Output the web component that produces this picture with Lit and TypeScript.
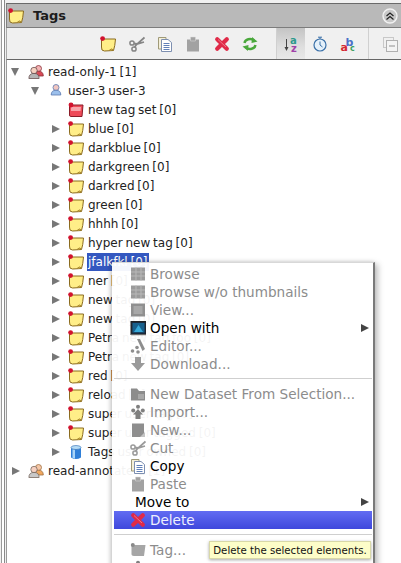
import { LitElement, css, html, svg } from "lit";
import { customElement } from "lit/decorators.js";

const note = (fill = "#ffee88", edge = "#8a6a1e") => svg`
  <path d="M1.5 3 H15.5 Q15 10 13.5 14.5 L4.5 15 Q1 15 1.5 11 Z" fill=${fill} stroke=${edge} stroke-width="1"/>
  <path d="M13.5 14 Q11.5 11.5 9 14.5" fill="#d8b84a" stroke=${edge} stroke-width=".6"/>
  <circle cx="2.6" cy="2.6" r="2.4" fill="#d2122e"/>`;

const person = (x: number, y: number, s: number, head: string, body: string, line: string) => svg`
  <circle cx=${x} cy=${y} r=${s} fill=${head} stroke=${line} stroke-width=".8"/>
  <path d="M${x - s * 1.6} ${y + s * 2.5} Q${x - s * 1.6} ${y + s * .9} ${x} ${y + s * .9} Q${x + s * 1.6} ${y + s * .9} ${x + s * 1.6} ${y + s * 2.5} Z" fill=${body} stroke=${line} stroke-width=".8"/>`;

const scissors = (c: string) => svg`
  <path d="M15.5 1.5 L7 9 L5.5 11.5 M15 6 L8 8 L5 7.5" stroke=${c} stroke-width="1.8" fill="none"/>
  <circle cx="3" cy="7" r="2.1" fill="none" stroke=${c} stroke-width="1.5"/>
  <circle cx="5" cy="13" r="2.1" fill="none" stroke=${c} stroke-width="1.5"/>`;

const pages = svg`
  <path d="M1.5 1.5 H9 V13 H1.5 Z" fill="#f4efd8" stroke="#a09a78"/>
  <path d="M4.5 3.5 H11 L14.5 6.5 V15.5 H4.5 Z" fill="#fff" stroke="#7d8fb0"/>
  <path d="M6.5 7.5 H12.5 M6.5 9.5 H12.5 M6.5 11.5 H12.5 M6.5 13.5 H12.5" stroke="#6080b8"/>`;

const clipboard = (c: string) => svg`
  <path d="M2 3.5 H14 V15.5 H2 Z" fill=${c}/><path d="M5.5 1 H10.5 V5 H5.5 Z" fill=${c} stroke="#ddd" stroke-width=".5"/>`;

const cross = svg`
  <path d="M3.2 3.2 L12.8 12.8 M12.8 3.2 L3.2 12.8" stroke="#e02a48" stroke-width="4.2" stroke-linecap="round"/>
  <path d="M4 3.5 L12 11" stroke="#f48a98" stroke-width=".8"/>`;

const grid = svg`
  <rect x="1" y="1.5" width="14" height="13" fill="#9b9b9b"/>
  <path d="M1 6 H15 M1 10 H15 M6 1.5 V14.5 M11 1.5 V14.5" stroke="#b8b8b8"/>`;

const icons: Record<string, unknown> = {
  note: note(),
  red: svg`
    <path d="M1.5 3 H15 L14 14.5 H3 Q1 14.5 1.5 12 Z" fill="#ee4a58" stroke="#8a1c28"/>
    <path d="M3 5 H13 L12.5 9 H3 Z" fill="#f7a4aa"/>
    <circle cx="3" cy="3" r="2.4" fill="#d2122e"/>`,
  users: svg`
    ${person(10.5, 4.5, 3, "#f4b4b4", "#d84a56", "#8a3038")}
    ${person(6, 6.5, 3.2, "#f6d0c0", "#b4b4b4", "#6a5050")}`,
  usersOrange: svg`
    ${person(10.5, 4.5, 3, "#f6c8a8", "#f0a860", "#a07040")}
    ${person(6, 6.5, 3.2, "#f6d0c0", "#c8c8c8", "#7a6a60")}`,
  user: person(8, 4.5, 3, "#f2c6c0", "#9cc0ec", "#5a78b0"),
  db: svg`
    <path d="M3 3.5 V13.5 Q8 16.5 13 13.5 V3.5 Z" fill="#2f7fd8"/>
    <path d="M4.5 5 V14 L7 14.8 V5.5 Z" fill="#a8d4f8"/>
    <ellipse cx="8" cy="3.5" rx="5" ry="2" fill="#b6dcf6" stroke="#2a68b0" stroke-width=".6"/>`,
  scissors: scissors("#858585"),
  scissorsMuted: scissors("#9a9a9a"),
  pages,
  clipboard: clipboard("#a2a2a2"),
  cross,
  refresh: svg`
    <path d="M2.5 7 A5.5 4.5 0 0 1 12 4.5" fill="none" stroke="#4aa83c" stroke-width="2.4"/>
    <path d="M10 1 L15.5 5.5 L9.5 7 Z" fill="#4aa83c"/>
    <path d="M13.5 9 A5.5 4.5 0 0 1 4 11.5" fill="none" stroke="#4aa83c" stroke-width="2.4"/>
    <path d="M6 15 L.5 10.5 L6.5 9 Z" fill="#4aa83c"/>`,
  az: svg`
    <path d="M3.5 3 V13" stroke="#444" stroke-width="1"/><path d="M1.5 11 L3.5 15 L5.5 11 Z" fill="#444"/>
    <text x="7" y="7.5" font-size="10" font-weight="700" font-family="DejaVu Sans" fill="#2c9a8c">a</text>
    <text x="8" y="15.5" font-size="10" font-weight="700" font-family="DejaVu Sans" fill="#a040a8">z</text>`,
  timer: svg`
    <circle cx="8" cy="9" r="6" fill="#e4f0fa" stroke="#3a70a8" stroke-width="1.2"/>
    <path d="M6 1.2 H10 M8 1.2 V3 M8 5.5 V9 L10.5 11" stroke="#3a70a8" stroke-width="1" fill="none"/>`,
  abc: svg`
    <text x="5.5" y="9.5" font-size="11" font-weight="700" font-family="DejaVu Sans" fill="#4a70c8">b</text>
    <text x="10" y="14.5" font-size="8" font-weight="700" font-family="DejaVu Sans" fill="#3aa060">c</text>
    <text x="0.5" y="15" font-size="11" font-weight="700" font-family="DejaVu Sans" fill="#d42830">a</text>`,
  collapse: svg`
    <rect x="1.5" y="1.5" width="10" height="10" fill="none" stroke="#c8c8c8"/>
    <rect x="4.5" y="4.5" width="11" height="11" fill="#f4f4f4" stroke="#b0b0b0"/>
    <path d="M7 10 H13" stroke="#a0a0a0" stroke-width="1.2"/>`,
  browse: grid,
  view: svg`
    <rect x="1" y="1.5" width="14" height="13" fill="#8f8f8f"/><rect x="3.5" y="4" width="9" height="8" fill="#a8a8a8"/>`,
  open: svg`
    <rect x="1" y="1.5" width="15" height="13" fill="#1c2a3c" stroke="#222"/>
    <rect x="2.5" y="3" width="12" height="9.5" fill="#18608c"/>
    <path d="M4 12 L8.5 5 L13 12 Z" fill="#36a8d8"/><path d="M1 14.8 H16" stroke="#888"/>`,
  editor: svg`
    <path d="M7 1 L10 1 L15 11 L12.5 13 Z" fill="#8e8e8e"/>
    <circle cx="2.5" cy="13" r="1.8" fill="#8e8e8e"/><circle cx="7" cy="9.5" r="1.8" fill="#8e8e8e"/><circle cx="8" cy="14" r="1.8" fill="#8e8e8e"/>`,
  download: svg`<path d="M5 1 H11 V7 H15 L8 15 L1 7 H5 Z" fill="#9a9a9a"/>`,
  dataset: svg`
    <path d="M1 2.5 H7 L9 5 H15 V14.5 H1 Z" fill="#8c8c8c"/><rect x="8" y="8" width="6" height="5" fill="#a8a8a8"/>`,
  import: svg`
    <circle cx="8" cy="2.8" r="2" fill="#7f7f7f"/><circle cx="3.2" cy="6.5" r="2" fill="#7f7f7f"/><circle cx="12.8" cy="6.5" r="2" fill="#7f7f7f"/>
    <path d="M8 5 L13 10.5 H10.5 V15 H5.5 V10.5 H3 Z" fill="#7f7f7f"/>`,
  newSet: svg`<path d="M2 1.5 H14 V13 L12 15 H2 Z" fill="#8e8e8e"/><path d="M10 15 L15 10 V15 Z" fill="#c4c4c4"/>`,
  tagOff: svg`<path d="M1.5 3 H15.5 L14 14 H4 Q1 14 1.5 11 Z" fill="#a6a6a6"/><circle cx="2.8" cy="3" r="2" fill="#8a8a8a"/>`,
};

const icon = (name: string) => html`<svg class="ico" viewBox="0 0 16 16" width="16" height="16">${icons[name]}</svg>`;

const tree: [number, string, string, string][] = [
  [0, "open", "users", "read-only-1 [1]"],
  [1, "open", "user", "user-3 user-3"],
  [2, "", "red", "new tag set [0]"],
  [2, "closed", "note", "blue [0]"],
  [2, "closed", "note", "darkblue [0]"],
  [2, "closed", "note", "darkgreen [0]"],
  [2, "closed", "note", "darkred [0]"],
  [2, "closed", "note", "green [0]"],
  [2, "closed", "note", "hhhh [0]"],
  [2, "closed", "note", "hyper new tag [0]"],
  [2, "closed", "note", "jfalkfkl [0]"],
  [2, "closed", "note", "ner [0]"],
  [2, "closed", "note", "new tag [0]"],
  [2, "closed", "note", "new tag [0]"],
  [2, "closed", "note", "Petra new tag foo [0]"],
  [2, "closed", "note", "Petra new tag [0]"],
  [2, "closed", "note", "red [0]"],
  [2, "closed", "note", "reload [0]"],
  [2, "closed", "note", "super user tag [0]"],
  [2, "closed", "note", "super user tagged [0]"],
  [2, "closed", "db", "Tags user owned [0]"],
  [0, "closed", "usersOrange", "read-annotate-1 [1]"],
];

type Item = { label?: string; ic?: string; on?: boolean; sub?: boolean; hot?: boolean; sep?: boolean; bare?: boolean };

const menu: Item[] = [
  { label: "Browse", ic: "browse" },
  { label: "Browse w/o thumbnails", ic: "browse" },
  { label: "View...", ic: "view" },
  { label: "Open with", ic: "open", on: true, sub: true },
  { label: "Editor...", ic: "editor" },
  { label: "Download...", ic: "download" },
  { sep: true },
  { label: "New Dataset From Selection...", ic: "dataset" },
  { label: "Import...", ic: "import" },
  { label: "New...", ic: "newSet" },
  { label: "Cut", ic: "scissorsMuted" },
  { label: "Copy", ic: "pages", on: true },
  { label: "Paste", ic: "clipboard" },
  { label: "Move to", on: true, sub: true, bare: true },
  { label: "Delete", ic: "cross", hot: true },
  { sep: true },
  { label: "Tag...", ic: "tagOff" },
  { label: "", ic: "import" },
];

@customElement("app-root")
export class AppRoot extends LitElement {
  static styles = css`
    :host {
      display: flex;
      position: relative;
      width: 401px;
      height: 563px;
      overflow: hidden;
      background: #f1f1f1;
      font-family: "DejaVu Sans", sans-serif;
      font-size: 12px;
      color: #222;
    }
    .rail {
      flex: none;
      width: 4px;
      margin-left: 1px;
      border-left: 1px solid #9a9a9a;
      border-right: 1px solid #8a8a8a;
      box-sizing: border-box;
      background: #fff;
    }
    .panel {
      flex: 1;
      display: flex;
      flex-direction: column;
      min-width: 0;
      padding-top: 3px;
      margin-left: 1px;
    }
    .head {
      flex: none;
      display: flex;
      align-items: center;
      height: 25px;
      box-sizing: border-box;
      border-top: 1px solid #6a6a6a;
      border-bottom: 1px solid #7c7c7c;
      border-left: 1px solid #808080;
      background: #b9b9b9;
      padding: 0 3px 0 1px;
    }
    .head .ico {
      margin-top: 1px;
    }
    .head b {
      margin-left: 9px;
      font-size: 13px;
      color: #1c1c1c;
    }
    .fold {
      margin-left: auto;
      display: flex;
    }
    .tools {
      flex: none;
      display: flex;
      align-items: center;
      height: 32px;
      box-sizing: border-box;
      padding-left: 87px;
      border-left: 1px solid #a8a8a8;
      border-bottom: 1px solid #666;
      background: #f0f0f0;
    }
    .tool {
      width: 28.4px;
      align-self: stretch;
      display: flex;
      align-items: center;
      justify-content: center;
      flex: none;
    }
    .tool.pressed {
      width: 29px;
      background: linear-gradient(#c4c4c4, #dedede 60%, #e8e8e8);
    }
    .tool.div {
      border-left: 1px solid #d0d0d0;
      box-sizing: border-box;
    }
    .gap {
      width: 12px;
      flex: none;
    }
    .gap.wide {
      width: 7px;
      margin-right: 7px;
      align-self: stretch;
      border-right: 1px solid #d0d0d0;
      box-sizing: border-box;
    }
    .tree {
      flex: 1;
      background: #fff;
      border-left: 1px solid #9a9a9a;
      padding-top: 2px;
      word-spacing: -1px;
    }
    .row {
      display: flex;
      align-items: center;
      height: 19px;
    }
    .l0 {
      padding-left: 4px;
    }
    .l1 {
      padding-left: 24px;
    }
    .l2 {
      padding-left: 44px;
    }
    .arrow {
      flex: none;
      width: 17px;
      display: flex;
    }
    .open i {
      width: 0;
      height: 0;
      border-left: 4.5px solid transparent;
      border-right: 4.5px solid transparent;
      border-top: 8px solid #777;
    }
    .closed i {
      width: 0;
      height: 0;
      margin-left: 1px;
      border-top: 4.5px solid transparent;
      border-bottom: 4.5px solid transparent;
      border-left: 8px solid #777;
    }
    .pic {
      flex: none;
      width: 20px;
      display: flex;
    }
    .name {
      white-space: nowrap;
      padding: 0 1px;
      margin-left: -1px;
    }
    .name.sel {
      background: #3458c0;
      color: #fff;
      line-height: 18px;
    }
    .menu {
      position: absolute;
      left: 112px;
      top: 262px;
      width: 263px;
      height: 310px;
      box-sizing: border-box;
      padding: 2px 1px 0 2px;
      background: rgba(255, 255, 255, 0.95);
      border-top: 1px solid #d8d8d8;
      border-right: 2px solid #7a7a7a;
      box-shadow: -2px 0 4px rgba(0, 0, 0, 0.18), 3px 2px 6px rgba(0, 0, 0, 0.25);
      color: #8c8c8c;
    }
    .item {
      display: flex;
      align-items: center;
      height: 18px;
      padding-left: 16px;
      white-space: nowrap;
      font-size: 13.6px;
    }
    .item .ico {
      flex: none;
      margin-right: 4px;
    }
    .item.on {
      color: #000;
    }
    .item.bare {
      padding-left: 21px;
    }
    .item.hot {
      background: linear-gradient(#626cf2, #3f48dc);
      color: #eef0ff;
    }
    .more {
      margin-left: auto;
      margin-right: 3px;
      width: 0;
      height: 0;
      border-top: 4.5px solid transparent;
      border-bottom: 4.5px solid transparent;
      border-left: 8px solid #444;
    }
    .sep {
      height: 12px;
      box-sizing: border-box;
      padding-top: 5px;
    }
    .sep::before {
      content: "";
      display: block;
      border-top: 1px solid #cfcfcf;
    }
    .tip {
      position: absolute;
      left: 209px;
      top: 541px;
      width: 162px;
      height: 18px;
      box-sizing: border-box;
      display: flex;
      align-items: center;
      justify-content: center;
      background: #fdfdc8;
      border: 1px solid #d8d8a8;
      box-shadow: 0 1px 3px rgba(0, 0, 0, 0.35);
      color: #111;
      font-size: 10.2px;
      white-space: nowrap;
    }
  `;

  private renderRow([level, state, ic, label]: [number, string, string, string]) {
    return html`<div class="row l${level}">
      <span class="arrow ${state}"><i></i></span>
      <span class="pic">${icon(ic)}</span>
      <span class="name ${label.startsWith("jfalk") ? "sel" : ""}">${label}</span>
    </div>`;
  }

  private renderItem(it: Item) {
    if (it.sep) return html`<div class="sep"></div>`;
    const cls = `item ${it.on ? "on" : ""} ${it.hot ? "hot" : ""} ${it.bare ? "bare" : ""}`;
    return html`<div class=${cls}>
      ${it.ic ? icon(it.ic) : ""}<span>${it.label}</span>
      ${it.sub ? html`<span class="more"></span>` : ""}
    </div>`;
  }

  render() {
    return html`
      <div class="rail"></div>
      <div class="panel">
        <div class="head">
          ${icon("note")}<b>Tags</b>
          <span class="fold">
            <svg viewBox="0 0 16 16" width="16" height="16">
              <circle cx="8" cy="8" r="7" fill="#c8c8c8" stroke="#f2f2f2" stroke-width="1.4" />
              <path d="M4.5 8 L8 5 L11.5 8 M4.5 11.5 L8 8.5 L11.5 11.5" fill="none" stroke="#222" stroke-width="1.2" />
            </svg>
          </span>
        </div>
        <div class="tools">
          <span class="tool">${icon("note")}</span>
          <span class="tool">${icon("scissors")}</span>
          <span class="tool">${icon("pages")}</span>
          <span class="tool">${icon("clipboard")}</span>
          <span class="tool">${icon("cross")}</span>
          <span class="tool">${icon("refresh")}</span>
          <span class="gap"></span>
          <span class="tool pressed div">${icon("az")}</span>
          <span class="tool">${icon("timer")}</span>
          <span class="tool">${icon("abc")}</span>
          <span class="gap wide"></span>
          <span class="tool">${icon("collapse")}</span>
        </div>
        <div class="tree">${tree.map((r) => this.renderRow(r))}</div>
      </div>
      <div class="menu">${menu.map((it) => this.renderItem(it))}</div>
      <div class="tip">Delete the selected elements.</div>
    `;
  }
}
